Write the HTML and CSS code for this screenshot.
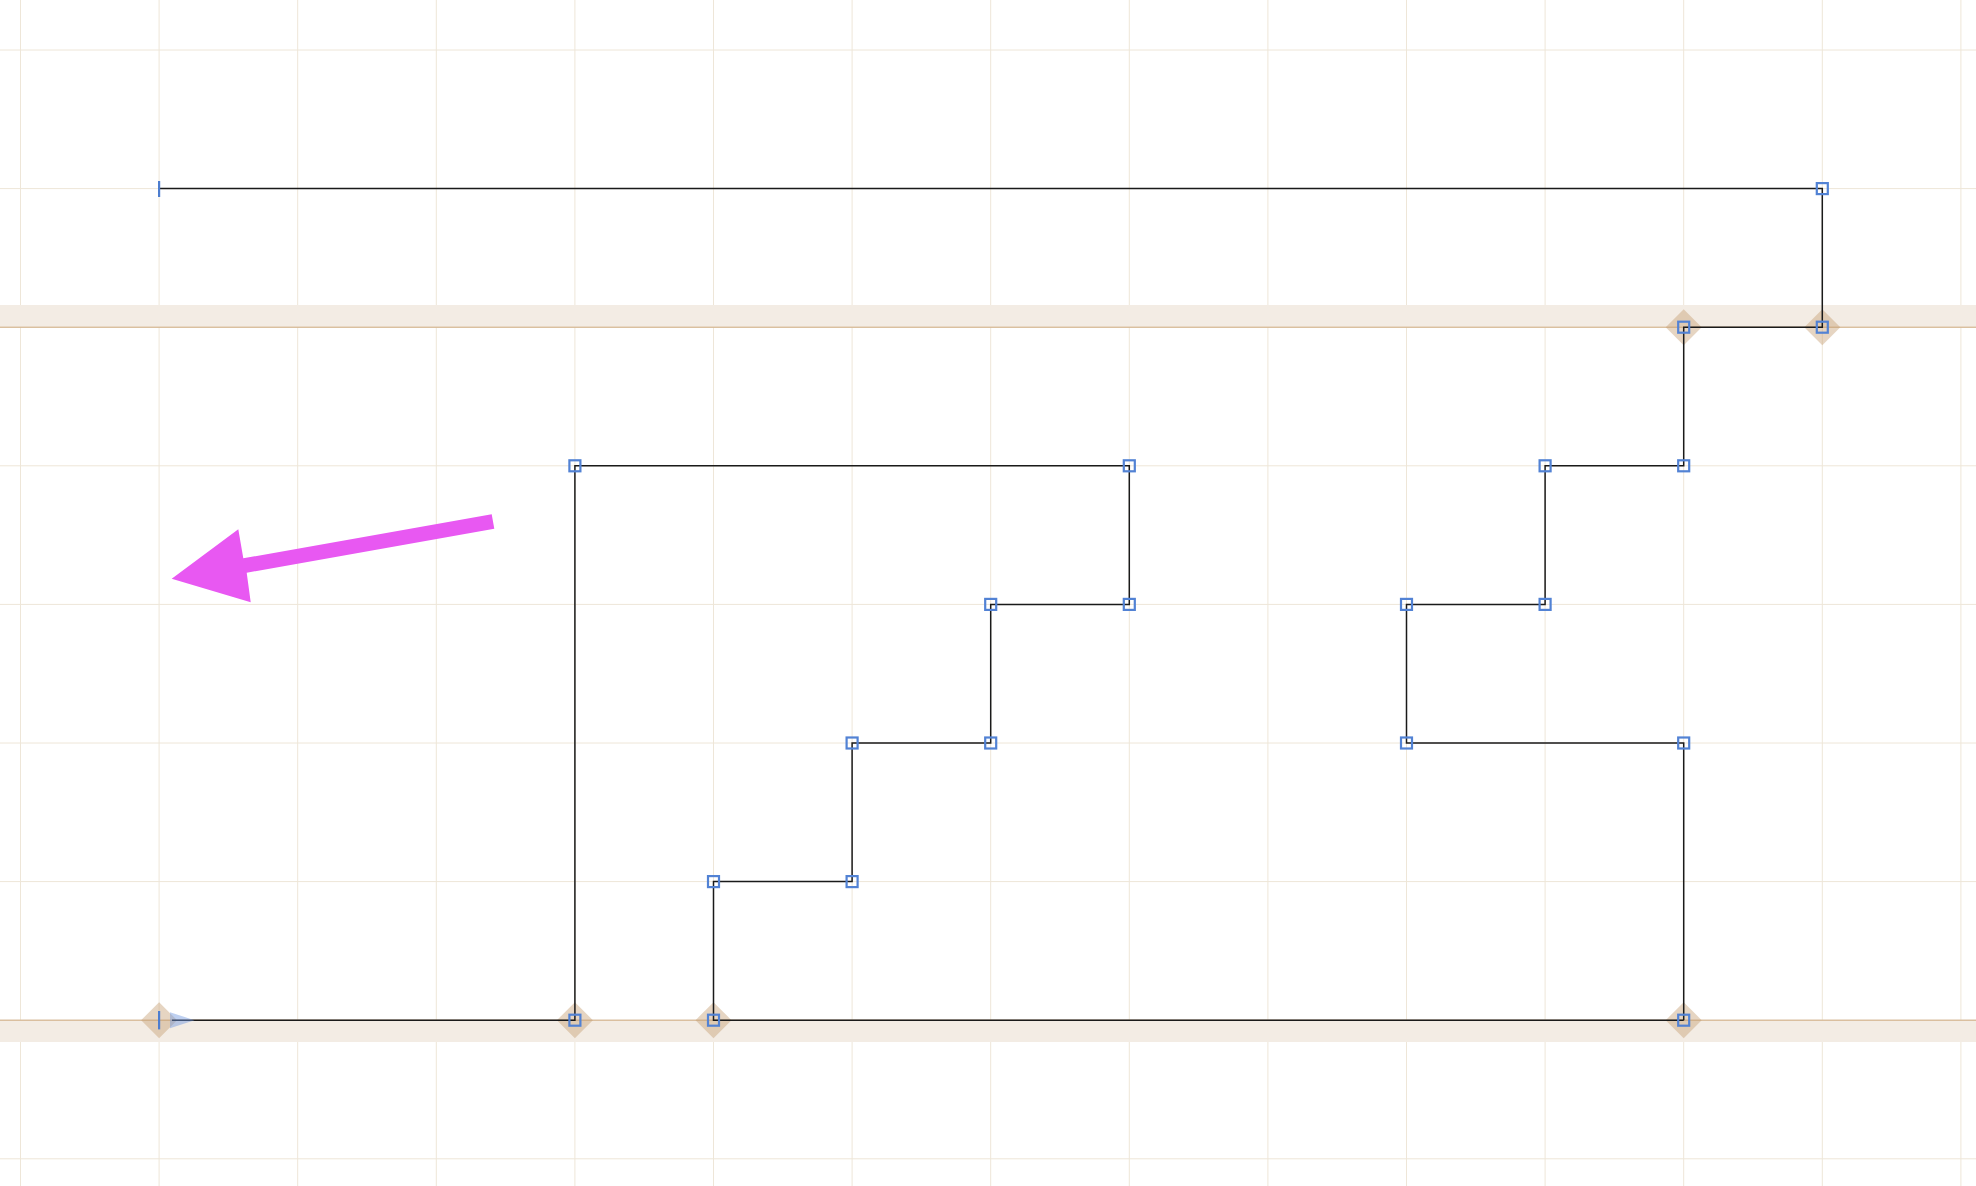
FILE: index.html
```html
<!DOCTYPE html>
<html>
<head>
<meta charset="utf-8">
<link rel="stylesheet" href="styles.css">
</head>
<body>
<div class="canvas">
<svg class="diagram" width="1976" height="1186" viewBox="0 0 1976 1186" xmlns="http://www.w3.org/2000/svg">
  <g class="grid">
    <line x1="20.5" y1="0" x2="20.5" y2="1186"/>
    <line x1="159.1" y1="0" x2="159.1" y2="1186"/>
    <line x1="297.7" y1="0" x2="297.7" y2="1186"/>
    <line x1="436.3" y1="0" x2="436.3" y2="1186"/>
    <line x1="574.9" y1="0" x2="574.9" y2="1186"/>
    <line x1="713.5" y1="0" x2="713.5" y2="1186"/>
    <line x1="852.1" y1="0" x2="852.1" y2="1186"/>
    <line x1="990.7" y1="0" x2="990.7" y2="1186"/>
    <line x1="1129.3" y1="0" x2="1129.3" y2="1186"/>
    <line x1="1267.9" y1="0" x2="1267.9" y2="1186"/>
    <line x1="1406.5" y1="0" x2="1406.5" y2="1186"/>
    <line x1="1545.1" y1="0" x2="1545.1" y2="1186"/>
    <line x1="1683.7" y1="0" x2="1683.7" y2="1186"/>
    <line x1="1822.3" y1="0" x2="1822.3" y2="1186"/>
    <line x1="1960.9" y1="0" x2="1960.9" y2="1186"/>
    <line x1="0" y1="50" x2="1976" y2="50"/>
    <line x1="0" y1="188.6" x2="1976" y2="188.6"/>
    <line x1="0" y1="327.2" x2="1976" y2="327.2"/>
    <line x1="0" y1="465.8" x2="1976" y2="465.8"/>
    <line x1="0" y1="604.4" x2="1976" y2="604.4"/>
    <line x1="0" y1="743" x2="1976" y2="743"/>
    <line x1="0" y1="881.6" x2="1976" y2="881.6"/>
    <line x1="0" y1="1020.2" x2="1976" y2="1020.2"/>
    <line x1="0" y1="1158.8" x2="1976" y2="1158.8"/>
  </g>

  <rect class="band" x="0" y="305" width="1976" height="22.2"/>
  <line class="band-edge" x1="0" y1="327.2" x2="1976" y2="327.2"/>
  <rect class="band" x="0" y="1020.2" width="1976" height="21.8"/>
  <line class="band-edge" x1="0" y1="1020.2" x2="1976" y2="1020.2"/>

  <g class="diamonds">
    <polygon points="1683.7,309.2 1701.7,327.2 1683.7,345.2 1665.7,327.2"/>
    <polygon points="1822.3,309.2 1840.3,327.2 1822.3,345.2 1804.3,327.2"/>
    <polygon points="159.1,1002.2 177.1,1020.2 159.1,1038.2 141.1,1020.2"/>
    <polygon points="574.9,1002.2 592.9,1020.2 574.9,1038.2 556.9,1020.2"/>
    <polygon points="713.5,1002.2 731.5,1020.2 713.5,1038.2 695.5,1020.2"/>
    <polygon points="1683.7,1002.2 1701.7,1020.2 1683.7,1038.2 1665.7,1020.2"/>
  </g>

  <polyline class="wire" points="159.1,188.6 1822.3,188.6 1822.3,327.2 1683.7,327.2 1683.7,465.8 1545.1,465.8 1545.1,604.4 1406.5,604.4 1406.5,743 1683.7,743 1683.7,1020.2"/>
  <polyline class="wire" points="172,1020.2 574.9,1020.2 574.9,465.8 1129.3,465.8 1129.3,604.4 990.7,604.4 990.7,743 852.1,743 852.1,881.6 713.5,881.6 713.5,1020.2 1683.7,1020.2"/>

  <polygon class="arrowhead" points="170,1012.2 194.5,1020.2 170,1028.2"/>
  <line class="tick" x1="159.1" y1="181" x2="159.1" y2="197"/>
  <line class="tick" x1="159.1" y1="1011" x2="159.1" y2="1029.4"/>

  <g class="handles">
    <rect x="1816.8" y="183.1" width="11" height="11"/>
    <rect x="1816.8" y="321.7" width="11" height="11"/>
    <rect x="1678.2" y="321.7" width="11" height="11"/>
    <rect x="1678.2" y="460.3" width="11" height="11"/>
    <rect x="1539.6" y="460.3" width="11" height="11"/>
    <rect x="1539.6" y="598.9" width="11" height="11"/>
    <rect x="1401" y="598.9" width="11" height="11"/>
    <rect x="1401" y="737.5" width="11" height="11"/>
    <rect x="1678.2" y="737.5" width="11" height="11"/>
    <rect x="1678.2" y="1014.7" width="11" height="11"/>
    <rect x="569.4" y="1014.7" width="11" height="11"/>
    <rect x="569.4" y="460.3" width="11" height="11"/>
    <rect x="1123.8" y="460.3" width="11" height="11"/>
    <rect x="1123.8" y="598.9" width="11" height="11"/>
    <rect x="985.2" y="598.9" width="11" height="11"/>
    <rect x="985.2" y="737.5" width="11" height="11"/>
    <rect x="846.6" y="737.5" width="11" height="11"/>
    <rect x="846.6" y="876.1" width="11" height="11"/>
    <rect x="708" y="876.1" width="11" height="11"/>
    <rect x="708" y="1014.7" width="11" height="11"/>
  </g>

  <polygon class="pointer" points="491.7,514.3 494.3,528.7 246.7,572.7 250.7,602.3 171.7,578.7 238.3,529.3 243.3,558.3"/>
</svg>
</div>
</body>
</html>
```

FILE: styles.css
```css
html, body {
  margin: 0;
  padding: 0;
  background: #ffffff;
  overflow: hidden;
}

.canvas {
  width: 1976px;
  height: 1186px;
}

.diagram {
  display: block;
}

.grid line {
  stroke: #eee6d8;
  stroke-width: 1;
}

.band {
  fill: #f3ece4;
}

.band-edge {
  stroke: #cfac80;
  stroke-width: 1;
}

.diamonds polygon {
  fill: rgba(196, 156, 110, 0.42);
}

.wire {
  fill: none;
  stroke: #1a1a1a;
  stroke-width: 1.5;
  stroke-linejoin: miter;
}

.arrowhead {
  fill: rgba(110, 150, 225, 0.45);
}

.tick {
  stroke: #4d7dcf;
  stroke-width: 2.2;
}

.handles rect {
  fill: none;
  stroke: #5282d4;
  stroke-width: 2.2;
}

.pointer {
  fill: #e858f2;
}
```
